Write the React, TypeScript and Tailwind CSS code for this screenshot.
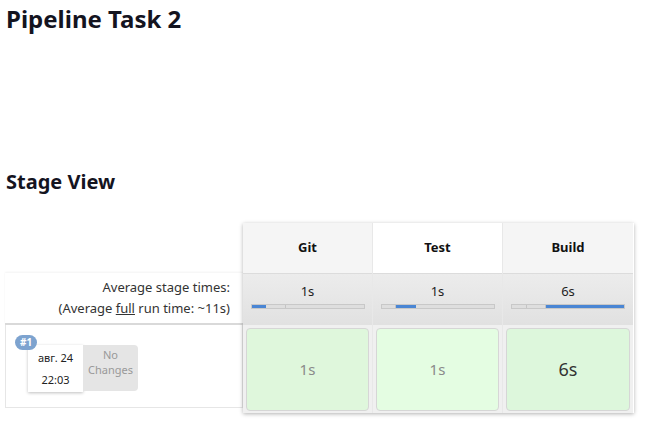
import React from "react";

const font = { fontFamily: '"Noto Sans", "Open Sans", sans-serif' };

function Bar({ segs }: { segs: { w: number; blue?: boolean }[] }) {
  return (
    <div className="mx-auto mt-[5px] flex h-[5px] w-[114px] overflow-hidden border border-[#c8c8c8] bg-[#dcdcdc]">
      {segs.map((s, i) => (
        <div
          key={i}
          style={{ width: s.w }}
          className={
            s.blue
              ? "h-full bg-[#4a86d4]"
              : "h-full border-r border-[#c4c4c4] bg-[#dedede] last:border-r-0"
          }
        />
      ))}
    </div>
  );
}

export default function App() {
  const stages = [
    { name: "Git", avg: "1s", hdr: "bg-[#f5f5f5]", cell: "bg-[#dff7dc]", txt: "text-[#8a8a8a] text-[15px]", val: "1s", segs: [{ w: 15, blue: true }, { w: 20 }, { w: 79 }] },
    { name: "Test", avg: "1s", hdr: "bg-white", cell: "bg-[#e4fde2]", txt: "text-[#8a8a8a] text-[15px]", val: "1s", segs: [{ w: 15 }, { w: 20, blue: true }, { w: 79 }] },
    { name: "Build", avg: "6s", hdr: "bg-[#f5f5f5]", cell: "bg-[#ddf7dc]", txt: "text-[#333] text-[18px]", val: "6s", segs: [{ w: 15 }, { w: 20 }, { w: 79, blue: true }] },
  ];
  return (
    <div className="h-[426px] w-[652px] overflow-hidden bg-white text-[#1a1a2a]" style={font}>
      <h1 className="pl-[6px] pt-[3px] text-[24px] font-bold leading-[32px] text-[#14141f]">Pipeline Task 2</h1>
      <h2 className="mt-[134px] pl-[6px] text-[20px] font-bold leading-[26px] text-[#14141f]">Stage View</h2>
      <div className="mt-[28px] flex">
        <div className="flex w-[243px] shrink-0 flex-col">
          <div className="h-[50px]" />
          <div className="ml-[5px] flex h-[52px] flex-col justify-center border-b-2 border-[#d9d9d9] pr-[13px] text-right text-[13px] leading-[21px] text-[#333] shadow-[0_-1px_2px_rgba(0,0,0,0.05)]">
            <div className="text-right">Average stage times:</div>
            <div className="text-right">
              (Average <span className="underline">full</span> run time: ~11s)
            </div>
          </div>
          <div className="ml-[5px] h-[83px] border border-t-0 border-[#e6e6e6] pl-[22px] pt-[20px]">
            <div className="relative flex">
              <div className="absolute left-[-13px] top-[-10px] z-10 rounded-full bg-[#7da3cf] px-[5px] text-[10px] font-bold leading-[15px] text-white">#1</div>
              <div className="flex h-[47px] w-[55px] flex-col items-center justify-center bg-white text-[11px] leading-[22px] text-[#222] shadow-[0_1px_3px_rgba(0,0,0,0.25)]">
                <div>авг. 24</div>
                <div>22:03</div>
              </div>
              <div className="flex h-[46px] w-[55px] flex-col items-center rounded-r-[4px] bg-[#e5e5e5] pt-[2px] text-[11px] leading-[15px] text-[#999]">
                <div>No</div>
                <div>Changes</div>
              </div>
            </div>
          </div>
        </div>
        <div className="flex w-[391px] shrink-0 shadow-[0_1px_4px_rgba(0,0,0,0.3)]">
          {stages.map((s, i) => (
            <div key={s.name} className={"flex w-[130px] flex-col " + (i < 2 ? "border-r border-[#e8e8e8]" : "")}>
              <div className={"flex h-[50px] items-center justify-center text-[13px] font-bold text-[#111] " + s.hdr}>{s.name}</div>
              <div className="h-[52px] border-t border-[#dcdcdc] bg-gradient-to-b from-[#ececec] to-[#e1e1e1] pt-[9px] text-center text-[13px] leading-[16px] text-[#222]">
                <div>{s.avg}</div>
                <Bar segs={s.segs} />
              </div>
              <div className="h-[88px] bg-[#f0f0f0] px-[3px] pt-[3px] pb-[2px]">
                <div className={"flex h-full items-center justify-center rounded-[4px] border border-[#d6d6d6] " + s.cell}>
                  <span className={s.txt}>{s.val}</span>
                </div>
              </div>
            </div>
          ))}
        </div>
      </div>
    </div>
  );
}
